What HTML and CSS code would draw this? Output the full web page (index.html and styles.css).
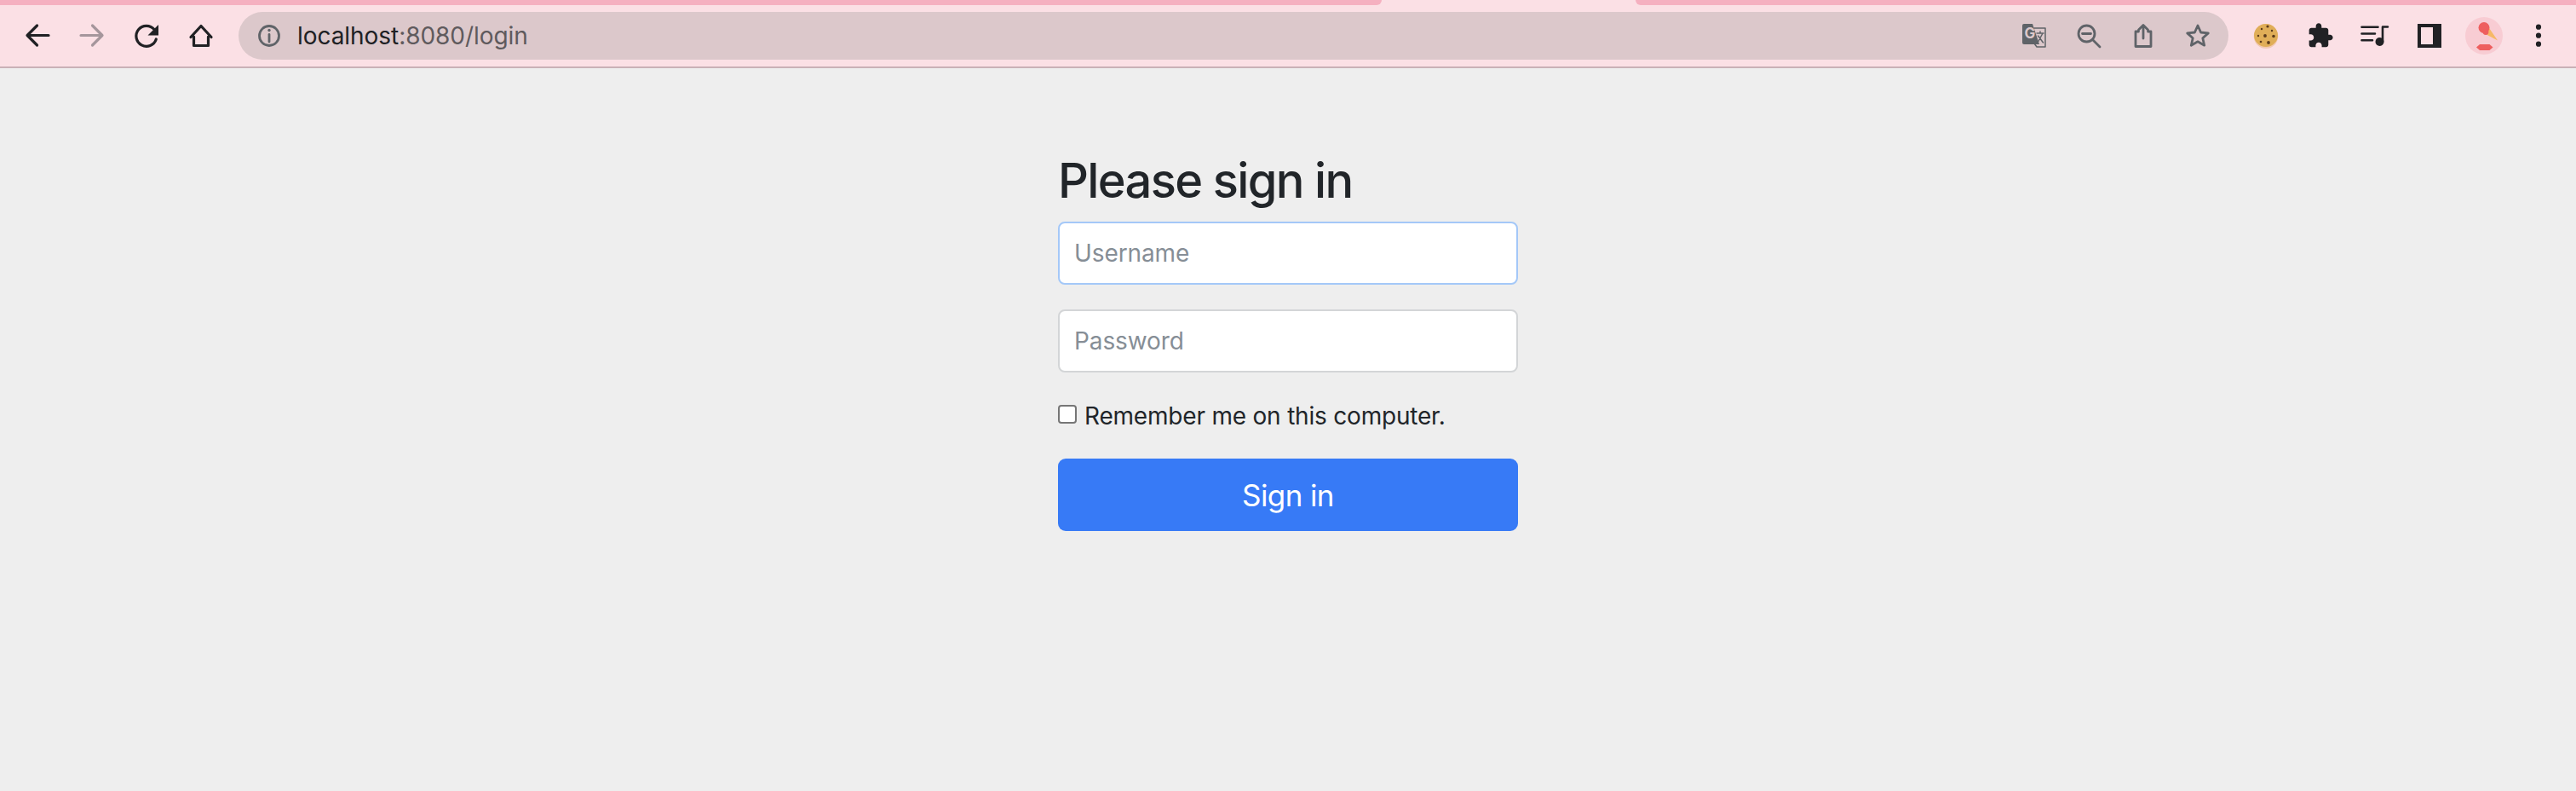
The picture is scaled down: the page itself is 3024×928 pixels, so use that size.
FILE: index.html
```html
<!DOCTYPE html>
<html lang="en">
<head>
  <meta charset="UTF-8" />
  <title>Please sign in</title>
  <link rel="stylesheet" href="styles.css">
</head>
<body>

  <div class="tab-strip">
    <div class="strip-left"></div>
    <div class="strip-right"></div>
  </div>

  <div class="toolbar">
    <div class="nav-icons">
      <svg class="icon" viewBox="0 0 48 48"><path class="dark-line" d="M37 23.5H12.5M23.5 12 12 23.5 23.5 35"/></svg>
      <svg class="icon" viewBox="0 0 48 48"><path class="faded-line" d="M11 23.5H35.5M24.5 12 36 23.5 24.5 35"/></svg>
      <svg class="icon" viewBox="0 0 48 48"><path class="dark-line" d="M33 16.5A12 12 0 1 0 35.3 28"/><path class="dark-fill" d="M38 11V23.5H25.5Z"/></svg>
      <svg class="icon" viewBox="0 0 48 48"><path class="dark-line" d="M15.5 25V35.5H32.5V25M12 25.5 24 12.5 36 25.5"/></svg>
    </div>

    <div class="omnibox">
      <svg class="icon" viewBox="0 0 48 48">
        <circle class="grey-line" cx="24" cy="24" r="11.5"/>
        <path class="grey-line" d="M24 22.5V31"/>
        <circle class="grey-fill" cx="24" cy="17.5" r="1.7"/>
      </svg>
      <div class="url"><span class="host">localhost</span>:8080/login</div>
      <svg class="icon" viewBox="0 0 48 48">
        <path class="grey-fill" d="M12 10H22L30 34H12Q10 34 10 32V12Q10 10 12 10Z"/>
        <text class="translate-g" x="12.5" y="27">G</text>
        <path class="thin-line" d="M24 15H37V37H27L24 33"/>
        <path class="thin-line" d="M27 21H35M31 19V21M34 21 28 32M28.5 24 34.5 32"/>
      </svg>
      <svg class="icon" viewBox="0 0 48 48">
        <circle class="grey-line" cx="21.5" cy="21.5" r="9.5"/>
        <path class="grey-line" d="M16.5 21.5H26.5M28.5 28.5 37 37"/>
      </svg>
      <svg class="icon" viewBox="0 0 48 48">
        <path class="grey-line" d="M18.5 19H15V36.5H33V19H29.5M24 27V12M18.5 17 24 11.5 29.5 17"/>
      </svg>
      <svg class="icon" viewBox="0 0 48 48">
        <polygon class="grey-line" points="24,12 27.6,20 36.3,20.9 29.8,26.7 31.7,35.2 24,30.8 16.3,35.2 18.2,26.7 11.7,20.9 20.4,20"/>
      </svg>
    </div>

    <div class="ext-icons">
      <svg class="icon" viewBox="0 0 48 48">
        <ellipse cx="24" cy="24.5" rx="14.3" ry="14.5" fill="#f3c9b4"/>
        <ellipse cx="24" cy="23.5" rx="14" ry="13.5" fill="#e0ae58"/>
        <g fill="#5b3b1c">
          <circle cx="26" cy="13" r="1.6"/>
          <circle cx="19" cy="16" r="1.2"/>
          <circle cx="31" cy="18" r="1.2"/>
          <circle cx="23" cy="24" r="1.9"/>
          <circle cx="15" cy="24" r="1.2"/>
          <circle cx="33" cy="24.5" r="1.8"/>
          <circle cx="18" cy="31" r="1.3"/>
          <circle cx="27" cy="32" r="1.9"/>
        </g>
      </svg>
      <svg class="icon" viewBox="0 0 48 48">
        <path class="dark-fill" transform="translate(8 8) scale(1.33)" d="M20.5 11H19V7c0-1.1-.9-2-2-2h-4V3.5C13 2.12 11.88 1 10.5 1S8 2.12 8 3.5V5H4c-1.1 0-1.99.9-1.99 2v3.8H3.5c1.49 0 2.7 1.21 2.7 2.7s-1.21 2.7-2.7 2.7H2V20c0 1.1.9 2 2 2h3.8v-1.5c0-1.49 1.21-2.7 2.7-2.7 1.49 0 2.7 1.21 2.7 2.7V22H17c1.1 0 2-.9 2-2v-4h1.5c1.38 0 2.5-1.12 2.5-2.5S21.88 11 20.5 11z"/>
      </svg>
      <svg class="icon" viewBox="0 0 48 48">
        <path class="dark-line thin" d="M8.5 13.7H27.5M8.5 21.5H24M8.5 29.3H21M33 31V13.5H39"/>
        <circle class="dark-fill" cx="29.5" cy="31" r="5"/>
      </svg>
      <svg class="icon" viewBox="0 0 48 48">
        <path class="dark-fill" fill-rule="evenodd" d="M10 10H38V38H10ZM14 14V34H28V14Z"/>
      </svg>
      <svg class="icon" viewBox="0 0 48 48">
        <circle cx="24" cy="24" r="22" fill="#f8ccd3"/>
        <polygon points="28,12 40,29.5 24,21" fill="#f6b866"/>
        <circle cx="24" cy="14.5" r="6.5" fill="#ee5f5f"/>
        <circle cx="26" cy="19.5" r="3.4" fill="#ee5f5f"/>
        <polygon points="15,37.5 19,34 30.5,34 34.5,37.5 30.5,41 19,41" fill="#ee5f5f"/>
      </svg>
      <svg class="icon" viewBox="0 0 48 48">
        <circle class="dark-fill" cx="24" cy="13.7" r="3.1"/>
        <circle class="dark-fill" cx="24" cy="23.7" r="3.1"/>
        <circle class="dark-fill" cx="24" cy="33.7" r="3.1"/>
      </svg>
    </div>
  </div>

  <form class="signin">
    <h1>Please sign in</h1>
    <input class="field focused" type="text" placeholder="Username" />
    <input class="field" type="password" placeholder="Password" />
    <label class="remember"><input type="checkbox" /> Remember me on this computer.</label>
    <button class="submit" type="button">Sign in</button>
  </form>

</body>
</html>
```

FILE: styles.css
```css
html, body {
  height: 100%;
}
body {
  margin: 0;
  background: #eeeeee;
  font-family: Inter, "Liberation Sans", sans-serif;
  color: #212529;
  overflow: hidden;
}

/* browser chrome */
.tab-strip {
  display: flex;
  justify-content: space-between;
  height: 6px;
  background: #fbe0e5;
}
.strip-left {
  width: 1622px;
  background: #f5b0c0;
  border-bottom-right-radius: 8px;
}
.strip-right {
  width: 1104px;
  background: #f5b0c0;
  border-bottom-left-radius: 8px;
}
.toolbar {
  display: flex;
  align-items: center;
  height: 72px;
  background: #fbe0e5;
  border-bottom: 2px solid #c9b1b7;
}
.nav-icons {
  display: flex;
  gap: 16px;
  padding-left: 20px;
  margin-right: 20px;
}
.omnibox {
  display: flex;
  align-items: center;
  gap: 16px;
  flex: 1;
  height: 56px;
  padding: 0 12px;
  border-radius: 28px;
  background: #dcc8cb;
}
.url {
  flex: 1;
  margin-left: -7px;
  font-size: 28px;
  letter-spacing: -0.05px;
  color: #5f5a5d;
}
.host {
  color: #202124;
}
.ext-icons {
  display: flex;
  gap: 16px;
  margin-left: 20px;
  padding-right: 20px;
}
.icon {
  width: 48px;
  height: 48px;
  flex: none;
}
.dark-line, .faded-line, .grey-line, .thin-line {
  fill: none;
  stroke-width: 3.2;
  stroke-linecap: round;
  stroke-linejoin: round;
}
.dark-line {
  stroke: #202124;
}
.dark-line.thin {
  stroke-width: 2.6;
}
.faded-line {
  stroke: #a5969c;
}
.grey-line {
  stroke: #5f6368;
  stroke-width: 2.8;
}
.thin-line {
  stroke: #5f6368;
  stroke-width: 1.5;
}
.dark-fill {
  fill: #202124;
}
.grey-fill {
  fill: #5f6368;
}
.translate-g {
  fill: #dcc8cb;
  font-size: 17px;
  font-weight: 700;
}

/* sign in form */
.signin {
  display: flex;
  flex-direction: column;
  width: 540px;
  margin: 0 auto;
  padding-top: 99px;
}
h1 {
  margin: 0 0 14px;
  font-size: 56px;
  line-height: 67px;
  font-weight: 500;
  letter-spacing: -1.65px;
}
.field {
  box-sizing: border-box;
  height: 74px;
  margin-bottom: 29px;
  padding: 0 17px;
  font-family: inherit;
  font-size: 28px;
  letter-spacing: -0.1px;
  background: #ffffff;
  border: 2px solid #d3d5d7;
  border-radius: 8px;
}
.field::placeholder {
  color: #868e96;
}
.focused {
  border-color: #a4c8f8;
}
.remember {
  display: flex;
  align-items: center;
  gap: 9px;
  height: 38px;
  margin-top: 3px;
  font-size: 28px;
  letter-spacing: -0.2px;
}
.remember input {
  appearance: none;
  box-sizing: border-box;
  width: 22px;
  height: 22px;
  margin: 0 0 4px;
  background: #ffffff;
  border: 2px solid #767676;
  border-radius: 4px;
}
.submit {
  height: 85px;
  margin-top: 31px;
  font-family: inherit;
  font-size: 35px;
  letter-spacing: -0.6px;
  color: #ffffff;
  background: #377af6;
  border: none;
  border-radius: 9px;
}
```
